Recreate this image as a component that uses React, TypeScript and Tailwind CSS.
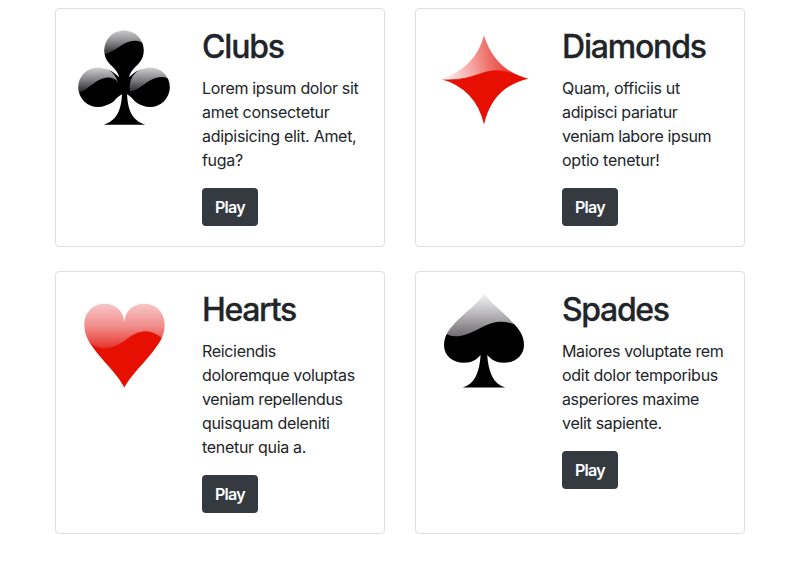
import type { ReactNode } from "react";

function Clubs() {
  return (
    <>
      <defs>
        <linearGradient id="club-top" x1="0" y1="1.5" x2="0" y2="24" gradientUnits="userSpaceOnUse">
          <stop offset="0" stopColor="#cacacc" />
          <stop offset="0.5" stopColor="#8a8a8c" />
          <stop offset="1" stopColor="#343436" />
        </linearGradient>
        <linearGradient id="club-low" x1="0" y1="38.5" x2="0" y2="62" gradientUnits="userSpaceOnUse">
          <stop offset="0" stopColor="#d0d0d2" />
          <stop offset="0.5" stopColor="#868688" />
          <stop offset="1" stopColor="#303032" />
        </linearGradient>
        <clipPath id="club-clip-top"><circle cx="48" cy="21.3" r="20.4" /></clipPath>
        <clipPath id="club-clip-left"><circle cx="22" cy="58.2" r="20.4" /></clipPath>
        <clipPath id="club-clip-right"><circle cx="74" cy="58.2" r="20.4" /></clipPath>
        <mask id="club-mask" maskUnits="userSpaceOnUse" x="0" y="0" width="96" height="96">
          <g fill="#fff">
            <circle cx="48" cy="21.3" r="19.8" />
            <circle cx="22" cy="58.2" r="19.8" />
            <circle cx="74" cy="58.2" r="19.8" />
            <path d="M28.6 25C32 36 41.5 39.5 43.2 48.2C40 46 38 42.500 30 40L28 76C38 76 39 68.500 46 65.200C45 82 41 91 27.800 95.700H69.200C56 91 52 82 51 65.200C57.500 68.500 59 76 68 76L66 40C58.500 42.500 56 46 53 48.200C54.800 39.500 64 36 67.400 25Z" />
          </g>
        </mask>
      </defs>
      <g mask="url(#club-mask)">
        <rect width="96" height="96" />
        <path clipPath="url(#club-clip-top)" fill="url(#club-top)" d="M27 0H69V17C65 10.500 56 10 46 16C40 20 34 24 27 26Z" />
        <path clipPath="url(#club-clip-left)" fill="url(#club-low)" d="M0 37H44V58C40 46.500 31 47 22 51.500C15 55.500 11 61 0 65Z" />
        <path clipPath="url(#club-clip-right)" fill="url(#club-low)" d="M52 37H96V52.500C90 46.500 82 47 74 51.500C67 55.500 63 61 53 63Z" />
      </g>
    </>
  );
}

function Diamonds() {
  return (
    <>
      <defs>
        <linearGradient id="diamond-gloss" x1="5" y1="52" x2="79" y2="39" gradientUnits="userSpaceOnUse">
          <stop offset="0" stopColor="#ffffff" />
          <stop offset="0.45" stopColor="#f4a29f" />
          <stop offset="1" stopColor="#e52b22" />
        </linearGradient>
        <linearGradient id="diamond-edge" x1="5" y1="0" x2="60" y2="0" gradientUnits="userSpaceOnUse">
          <stop offset="0" stopColor="#d83530" stopOpacity="0.3" />
          <stop offset="0.4" stopColor="#c9120c" />
          <stop offset="1" stopColor="#e60f00" />
        </linearGradient>
        <mask id="diamond-mask" maskUnits="userSpaceOnUse" x="0" y="0" width="96" height="96">
          <path
            fill="#fff"
            d="M48 6.500Q59 41.500 92.300 49.700Q56.500 58 48 95.500Q40 59.500 4 49.700Q38.600 40.400 48 6.500Z"
          />
        </mask>
      </defs>
      <g mask="url(#diamond-mask)">
        <rect width="96" height="96" fill="#e60f00" />
        <path
          d="M0 0H96V49C80 47 70 41 59 41.700C46 42 36 50.500 17 50.500C11 51 7 51 0 50Z"
          fill="url(#diamond-gloss)"
          stroke="url(#diamond-edge)"
          strokeWidth="0.8"
        />
      </g>
    </>
  );
}

function Hearts() {
  return (
    <>
      <defs>
        <linearGradient id="heart-gloss" x1="0" y1="11" x2="0" y2="57" gradientUnits="userSpaceOnUse">
          <stop offset="0" stopColor="#f7c9c9" />
          <stop offset="0.5" stopColor="#f18e8c" />
          <stop offset="1" stopColor="#e7302a" />
        </linearGradient>
        <mask id="heart-mask" maskUnits="userSpaceOnUse" x="0" y="0" width="96" height="96">
          <path
            fill="#fff"
            d="M48.300 29.700C47 18 39 11.700 28.300 11.700C16.500 11.700 8.300 21 8.300 33C8.300 45 15 53 22 62C33 75.500 42 83.500 48.300 95.500C55 83.500 64 75.500 75 62C82 53 88.700 45 88.700 33C88.700 21 80.500 11.700 68.300 11.700C57.500 11.700 49.500 18 48.300 29.700Z"
          />
        </mask>
      </defs>
      <g mask="url(#heart-mask)">
        <rect width="96" height="96" fill="#e60f00" />
        <path
          d="M-2 -2H98V57C86 46 79 38.500 67 39.700C53 41 46 56 29 56.200C22 56.200 17 54 12 49L-2 46Z"
          fill="url(#heart-gloss)"
          stroke="#df2520"
          strokeWidth="0.7"
        />
      </g>
    </>
  );
}

function Spades() {
  return (
    <>
      <defs>
        <linearGradient id="spade-gloss" x1="0" y1="2" x2="0" y2="45" gradientUnits="userSpaceOnUse">
          <stop offset="0" stopColor="#f4f4f5" />
          <stop offset="0.5" stopColor="#b4b2b4" />
          <stop offset="1" stopColor="#6c6a6e" />
        </linearGradient>
        <mask id="spade-mask" maskUnits="userSpaceOnUse" x="0" y="0" width="96" height="96">
          <path
            fill="#fff"
            d="M48.300 1.300C43 10 34 17 25 25C17 33 8 41 8 53C8 64 17 70.700 28 70.700C36 70.700 41 67.500 44.600 63C43.500 80 39 92 26.800 95.500H69.200C57 92 52.500 80 51.200 63C55 67.500 60 70.700 68 70.700C79 70.700 88 64 88 53C88 41 80 34 72 25.500C63 17 54 10 48.300 1.300Z"
          />
        </mask>
      </defs>
      <g mask="url(#spade-mask)">
        <rect width="96" height="96" />
        <path
          d="M0 0H96V42C85 35 76 29.500 64 29.700C48 30 37 44.200 19 44.300C15 44.300 12 43 9 41H0Z"
          fill="url(#spade-gloss)"
        />
      </g>
    </>
  );
}

type Suit = { name: string; tracking: string; lines: [string, string][]; art: ReactNode };

const suits: Suit[] = [
  {
    name: "Clubs",
    tracking: "tracking-[-1.2px]",
    art: <Clubs />,
    lines: [
      ["Lorem ipsum dolor sit", "tracking-[-0.33px]"],
      ["amet consectetur", "tracking-[-0.3px]"],
      ["adipisicing elit. Amet,", "tracking-[-0.29px]"],
      ["fuga?", "tracking-[-0.3px]"],
    ],
  },
  {
    name: "Diamonds",
    tracking: "tracking-[-1.2px]",
    art: <Diamonds />,
    lines: [
      ["Quam, officiis ut", "tracking-[-0.3px]"],
      ["adipisci pariatur", "tracking-[-0.33px]"],
      ["veniam labore ipsum", "tracking-[-0.37px]"],
      ["optio tenetur!", "tracking-[-0.25px]"],
    ],
  },
  {
    name: "Hearts",
    tracking: "tracking-[-1.35px]",
    art: <Hearts />,
    lines: [
      ["Reiciendis", "tracking-[-0.33px]"],
      ["doloremque voluptas", "tracking-[-0.34px]"],
      ["veniam repellendus", "tracking-[-0.37px]"],
      ["quisquam deleniti", "tracking-[-0.32px]"],
      ["tenetur quia a.", "tracking-[-0.3px]"],
    ],
  },
  {
    name: "Spades",
    tracking: "tracking-[-1.35px]",
    art: <Spades />,
    lines: [
      ["Maiores voluptate rem", "tracking-[-0.34px]"],
      ["odit dolor temporibus", "tracking-[-0.29px]"],
      ["asperiores maxime", "tracking-[-0.37px]"],
      ["velit sapiente.", "tracking-[-0.3px]"],
    ],
  },
];

function SuitCard({ suit }: { suit: Suit }) {
  return (
    <article className="flex items-start gap-[30px] rounded border border-[#dfdfdf] bg-white p-5">
      <svg viewBox="0 0 96 96" className="size-24 shrink-0" aria-hidden="true">
        {suit.art}
      </svg>
      <div className="min-w-0 flex-1">
        <h2
          className={`mb-2 h-[39px] text-[32px] leading-[36px] font-medium whitespace-nowrap [-webkit-text-stroke:0.3px_#212529] ${suit.tracking}`}
        >
          {suit.name}
        </h2>
        <p className="mb-4 text-base leading-6">
          {suit.lines.map(([text, tracking]) => (
            <span key={text} className={`block whitespace-nowrap ${tracking}`}>
              {text}
            </span>
          ))}
        </p>
        <button
          type="button"
          className="block h-[38px] w-14 rounded bg-[#343a40] text-base font-semibold tracking-[-0.7px] text-white"
        >
          Play
        </button>
      </div>
    </article>
  );
}

export default function App() {
  return (
    <main className="h-[565px] bg-white pt-2 font-['Inter','Liberation_Sans',sans-serif] text-[#212529]">
      <div className="mx-auto grid w-[690px] grid-cols-2 gap-x-[30px] gap-y-6">
        {suits.map((suit) => (
          <SuitCard key={suit.name} suit={suit} />
        ))}
      </div>
    </main>
  );
}
